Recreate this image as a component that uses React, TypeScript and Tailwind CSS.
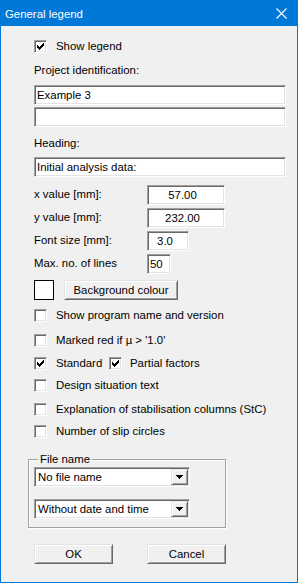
import React from 'react';

const sunken =
  'border border-t-[#a0a0a0] border-l-[#a0a0a0] border-b-white border-r-white bg-white shadow-[inset_1px_1px_0_#696969,inset_-1px_-1px_0_#e3e3e3]';
const raised =
  'border border-t-[#e3e3e3] border-l-[#e3e3e3] border-b-[#696969] border-r-[#696969] bg-[#f0f0f0] shadow-[inset_1px_1px_0_#ffffff,inset_-1px_-1px_0_#a0a0a0]';

const checkRows: [number, number][][] = [
  [[6, 6]],
  [[5, 6]],
  [[0, 0], [4, 6]],
  [[0, 1], [3, 5]],
  [[0, 4]],
  [[1, 3]],
  [[2, 2]],
];

const CheckMark = () => (
  <svg width="7" height="7" viewBox="0 0 7 7" shapeRendering="crispEdges">
    {checkRows.map((row, y) =>
      row.map(([a, b]) => <rect key={`${y}-${a}`} x={a} y={y} width={b - a + 1} height={1} fill="#000" />)
    )}
  </svg>
);

const Box = ({ checked }: { checked?: boolean }) => (
  <span className={`${sunken} w-[13px] h-[13px] flex items-center justify-center shrink-0`}>
    {checked && <CheckMark />}
  </span>
);

const CheckRow = ({ label, checked, className = '' }: { label: string; checked?: boolean; className?: string }) => (
  <div className={`flex items-center h-[13px] ${className}`}>
    <Box checked={checked} />
    <span className="ml-[9px] leading-[13px] whitespace-nowrap">{label}</span>
  </div>
);

const Edit = ({ value, className = '' }: { value: string; className?: string }) => (
  <div className={`${sunken} h-[20px] flex items-center leading-[13px] whitespace-nowrap ${className}`}>{value}</div>
);

const ValueRow = ({ label, value, className = '', editClass }: { label: string; value: string; className?: string; editClass: string }) => (
  <div className={`flex items-center h-[20px] ${className}`}>
    <span className="w-[113px] leading-[13px] -mt-[2px]">{label}</span>
    <Edit value={value} className={editClass} />
  </div>
);

const Combo = ({ value, className = '' }: { value: string; className?: string }) => (
  <div className={`${sunken} w-[156px] h-[20px] p-[1px] flex ${className}`}>
    <span className="flex-1 pl-[2px] leading-[16px] whitespace-nowrap">{value}</span>
    <span className={`${raised} w-[17px] h-full flex items-center justify-center`}>
      <svg width="7" height="4" viewBox="0 0 7 4" shapeRendering="crispEdges">
        <path d="M0 0h7v1h-7zM1 1h5v1h-5zM2 2h3v1h-3zM3 3h1v1h-1z" fill="#000" />
      </svg>
    </span>
  </div>
);

const Button = ({ label, className = '' }: { label: string; className?: string }) => (
  <div className={`${raised} h-[20px] flex items-center justify-center leading-[13px] ${className}`}>{label}</div>
);

export default function App() {
  return (
    <div className="w-[298px] h-[583px] bg-[#f0f0f0] border border-[#0078d7] flex flex-col font-['Liberation_Sans',Arial,sans-serif] text-[11.4px] text-black overflow-hidden">
      <div className="h-[25px] bg-[#0078d7] flex items-center justify-between pl-[4px] pr-[10px] shrink-0">
        <span className="text-white text-[11.4px] leading-[14px] mt-[1px]">General legend</span>
        <svg width="11" height="11" viewBox="0 0 11 11">
          <path d="M0.5 0.5L10.5 10.5M10.5 0.5L0.5 10.5" stroke="#fff" strokeWidth="1.1" />
        </svg>
      </div>

      <div className="flex flex-col pl-[33px]">
        <CheckRow label="Show legend" checked className="mt-[14px]" />
        <div className="mt-[10px] h-[14px] leading-[14px]">Project identification:</div>
        <Edit value="Example 3" className="mt-[8px] w-[252px] pl-[2px]" />
        <Edit value="" className="mt-[2px] w-[252px] pl-[2px]" />
        <div className="mt-[9px] h-[14px] leading-[14px]">Heading:</div>
        <Edit value="Initial analysis data:" className="mt-[7px] w-[252px] pl-[2px]" />

        <ValueRow label="x value [mm]:" value="57.00" className="mt-[8px]" editClass="w-[78px] justify-center pr-[7px]" />
        <ValueRow label="y value [mm]:" value="232.00" className="mt-[3px]" editClass="w-[78px] justify-center pr-[7px]" />
        <ValueRow label="Font size [mm]:" value="3.0" className="mt-[3px]" editClass="w-[42px] justify-center pr-[6px]" />
        <ValueRow label="Max. no. of lines" value="50" className="mt-[3px]" editClass="w-[24px] pl-[2px]" />

        <div className="mt-[6px] flex items-center h-[20px]">
          <span className="w-[20px] h-[20px] border border-black bg-white" />
          <Button label="Background colour" className="ml-[10px] w-[114px]" />
        </div>

        <CheckRow label="Show program name and version" className="mt-[9px]" />
        <CheckRow label="Marked red if µ > '1.0'" className="mt-[12px]" />
        <div className="mt-[10px] flex items-center h-[13px]">
          <Box checked />
          <span className="ml-[9px] w-[53px] leading-[13px]">Standard</span>
          <Box checked />
          <span className="ml-[8px] leading-[13px]">Partial factors</span>
        </div>
        <CheckRow label="Design situation text" className="mt-[9px]" />
        <CheckRow label="Explanation of stabilisation columns (StC)" className="mt-[11px]" />
        <CheckRow label="Number of slip circles" className="mt-[9px]" />

        <div className="relative mt-[21px] -ml-[6px] w-[198px] border border-[#a0a0a0] shadow-[inset_1px_1px_0_#ffffff,1px_1px_0_#ffffff] pl-[5px] pt-[7px] pb-[8px]">
          <span className="absolute -top-[8px] left-[9px] px-[2px] bg-[#f0f0f0] leading-[14px]">File name</span>
          <Combo value="No file name" />
          <Combo value="Without date and time" className="mt-[12px]" />
        </div>

        <div className="mt-[16px] flex items-center">
          <Button label="OK" className="w-[79px]" />
          <Button label="Cancel" className="ml-[34px] w-[79px]" />
        </div>
      </div>
    </div>
  );
}
